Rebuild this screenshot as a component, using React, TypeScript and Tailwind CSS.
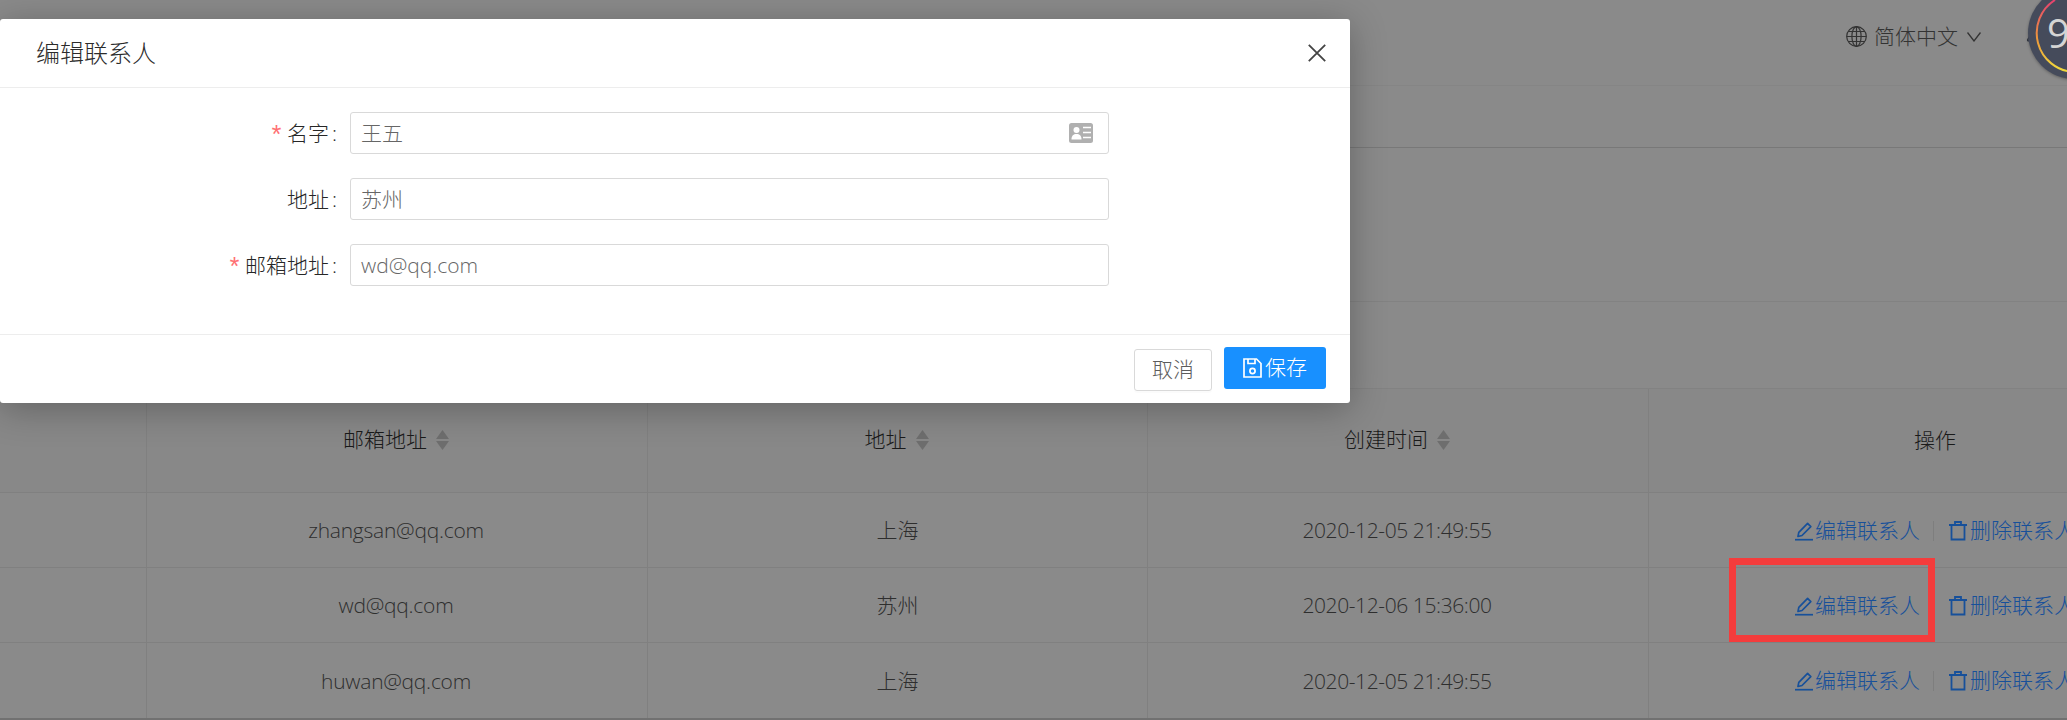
import { Bell } from "lucide-react";

const rows = [
  { email: "zhangsan@qq.com", address: "上海", time: "2020-12-05 21:49:55" },
  { email: "wd@qq.com", address: "苏州", time: "2020-12-06 15:36:00" },
  { email: "huwan@qq.com", address: "上海", time: "2020-12-05 21:49:55" },
];

const SortIcon = () => (
  <svg width="13" height="20" viewBox="0 0 13 20" className="ml-[9px] text-[#6e6e6e]" fill="currentColor">
    <path d="M6.5 0L13 9H0z" />
    <path d="M0 11h13l-6.5 9z" />
  </svg>
);

const EditIcon = () => (
  <svg width="18" height="20" viewBox="0 0 18 20" fill="none" stroke="currentColor" strokeWidth="1.7">
    <path d="M3 15.5l.8-4.2L12.6 2.4l3.2 3.2-8.8 8.9z" strokeLinejoin="round" />
    <path d="M0 18.7h18" />
  </svg>
);

const TrashIcon = () => (
  <svg width="18" height="20" viewBox="0 0 18 20" fill="none" stroke="currentColor" strokeWidth="1.8">
    <path d="M0 4h18M6 4V1h6v3M2.5 4v14.5h13V4" />
  </svg>
);

const IdCardIcon = () => (
  <svg width="24" height="20" viewBox="0 0 24 20" className="absolute right-[15px] top-[10px]">
    <rect width="24" height="20" rx="2.5" fill="#b0b0b0" />
    <circle cx="7.5" cy="7" r="3" fill="#fff" />
    <path d="M2.5 16.5c0-4 2-5.5 5-5.5s5 1.5 5 5.5z" fill="#fff" />
    <path d="M14 4.5h8M14 9.5h8M14 14.5h8" stroke="#fff" strokeWidth="1.6" />
  </svg>
);

const Field = ({ label, value, required, icon }: { label: string; value: string; required?: boolean; icon?: boolean }) => (
  <div className="flex items-center h-[42px]">
    <div className="w-[350px] pr-[13px] pt-[1px] flex justify-end items-center text-[21px] text-[#262626]">
      {required && (
        <span className="text-[#ff7073] mr-[3px] font-['Liberation_Mono'] text-[25px] leading-none translate-y-[4px]">*</span>
      )}
      <span>{label}</span>
      <span className="ml-[3px]">:</span>
    </div>
    <div className="relative w-[759px] h-[42px] border border-[#d9d9d9] rounded-[3px] pl-[10px] pt-[1px] flex items-center text-[21px] text-[#666666]">
      {value}
      {icon && <IdCardIcon />}
    </div>
  </div>
);

export default function App() {
  return (
    <div className="relative w-[2067px] h-[720px] overflow-hidden bg-[#8a8a8a] font-['Open_Sans','Noto_Sans_CJK_SC',sans-serif] font-light">
      {/* Top bar */}
      <div className="h-[86px] border-b border-[#858585] flex justify-end items-start pt-[26px] pr-[21px] text-[#333333]">
        <svg width="21" height="21" viewBox="0 0 21 21" fill="none" stroke="currentColor" strokeWidth="1.2">
          <circle cx="10.5" cy="10.5" r="9.8" />
          <ellipse cx="10.5" cy="10.5" rx="4.6" ry="9.8" />
          <path d="M10.5 .7v19.6M.7 10.5h19.6M2.2 5.5h16.6M2.2 15.5h16.6" />
        </svg>
        <span className="ml-[7px] text-[21px] leading-[21px]">简体中文</span>
        <svg width="14" height="10" viewBox="0 0 14 10" fill="none" stroke="currentColor" strokeWidth="1.3" className="ml-[9px] mt-[6px]">
          <path d="M.5 .5L7 9l6.5-8.5" />
        </svg>
        <Bell size={21} strokeWidth={1.6} className="ml-[44px] text-[#303540]" />
      </div>

      {/* Tabs strip */}
      <div className="h-[62px] border-b border-[#787878]" />

      {/* Filter area */}
      <div className="h-[154px] border-b border-[#828282]" />
      <div className="h-[86px]" />

      {/* Table */}
      <div className="w-[2221px] border-t border-[#828282] border-b-[3px] border-b-[#717171]">
        <div className="grid grid-cols-[147px_501px_500px_501px_572px] h-[104px] border-b border-[#808080] bg-[#888888] text-[21px] text-[#1a1a1a]">
          <div className="border-r border-[#808080]" />
          {["邮箱地址", "地址", "创建时间"].map((title) => (
            <div key={title} className="border-r border-[#808080] flex items-center justify-center pb-[1px] pr-[2px]">
              {title}
              <SortIcon />
            </div>
          ))}
          <div className="flex items-center justify-center">操作</div>
        </div>
        {rows.map((row, i) => (
          <div
            key={row.email}
            className={`grid grid-cols-[147px_501px_500px_501px_572px] h-[75px] text-[21px] text-[#2e2e2e] ${i < 2 ? "border-b border-[#808080]" : ""}`}
          >
            <div className="border-r border-[#808080]" />
            <div className="border-r border-[#808080] flex items-center justify-center pt-[2px] pr-[2px] tracking-[-0.25px]">{row.email}</div>
            <div className="border-r border-[#808080] flex items-center justify-center pt-[2px]">{row.address}</div>
            <div className="border-r border-[#808080] flex items-center justify-center pt-[2px] pr-[2px] tracking-[-0.4px]">{row.time}</div>
            <div className="flex items-center pl-[146px] pt-[1px] text-[#17509a]">
              <EditIcon />
              <span className="ml-[2px]">编辑联系人</span>
              <span className={`h-[20px] w-px ml-[13px] mr-[15px] ${i === 1 ? "" : "bg-[#7e7e7e]"}`} />
              <TrashIcon />
              <span className="ml-[3px]">删除联系人</span>
            </div>
          </div>
        ))}
      </div>

      {/* Annotation */}
      <div className="absolute left-[1729px] top-[558px] w-[206px] h-[84px] border-[7px] border-[#f43c3c]" />

      {/* Floating badge */}
      <div className="absolute left-[2028px] top-[-13px] w-[92px] h-[92px] rounded-full bg-[#454b5b] shadow-[0_1px_3px_rgba(0,0,0,0.3)]">
        <svg width="92" height="92" viewBox="0 0 92 92" fill="none" className="absolute inset-0">
          <defs>
            <linearGradient id="ring" x1="0" y1="0" x2="0" y2="1">
              <stop offset="0" stopColor="#e5416f" />
              <stop offset="0.55" stopColor="#ee9a3a" />
              <stop offset="1" stopColor="#f0dc3c" />
            </linearGradient>
          </defs>
          <path d="M27 13A39 39 0 0 0 46 85" stroke="url(#ring)" strokeWidth="2" />
        </svg>
        <span className="absolute left-[19px] top-[20px] text-[40px] leading-[52px] font-normal text-[#d4d4d4]">9</span>
      </div>

      {/* Modal */}
      <div className="absolute left-0 top-[19px] w-[1350px] h-[384px] bg-white rounded-[3px] shadow-[0_6px_36px_rgba(0,0,0,0.28)] flex flex-col">
        <div className="h-[69px] shrink-0 border-b border-[#ededed] pl-[36px] pr-[24px] flex items-center justify-between">
          <span className="text-[24px] text-[#2b2b2b]">编辑联系人</span>
          <svg width="18" height="18" viewBox="0 0 18 18" stroke="#444444" strokeWidth="1.8">
            <path d="M.8 .8l16.4 16.4M17.2 .8L.8 17.2" />
          </svg>
        </div>
        <div className="h-[246px] shrink-0 pt-[24px] flex flex-col gap-[24px]">
          <Field label="名字" value="王五" required icon />
          <Field label="地址" value="苏州" />
          <Field label="邮箱地址" value="wd@qq.com" required />
        </div>
        <div className="flex-1 border-t border-[#ededed] pr-[24px] flex justify-end items-start">
          <button className="w-[78px] h-[42px] mt-[14px] border border-[#d9d9d9] rounded-[3px] text-[21px] text-[#5c5c5c] font-light shadow-[0_2px_0_rgba(0,0,0,0.015)]">
            取消
          </button>
          <button className="ml-[12px] w-[102px] h-[42px] mt-[12px] bg-[#1890ff] rounded-[3px] text-[21px] text-white font-light flex items-center justify-center">
            <svg width="19" height="20" viewBox="0 0 19 20" fill="none" stroke="#fff" strokeWidth="1.7">
              <path d="M1 1h12.5L18 5.5V19H1z" />
              <path d="M5 1v4.5h7V1" />
              <circle cx="9.5" cy="13" r="2.6" />
            </svg>
            <span className="ml-[3px]">保存</span>
          </button>
        </div>
      </div>
    </div>
  );
}
